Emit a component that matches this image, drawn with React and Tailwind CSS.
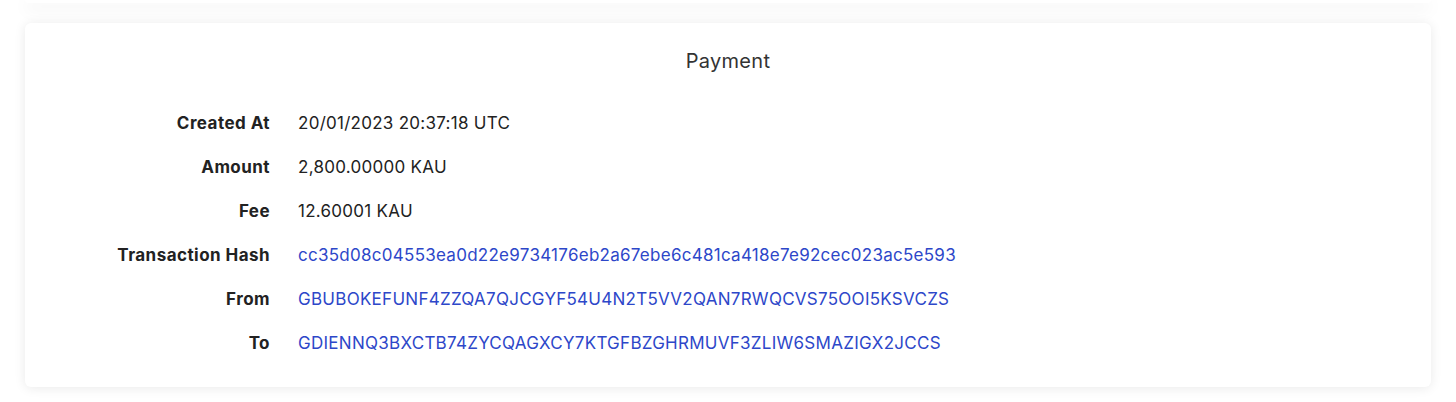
export default function App() {
  const rows = [
    ["Created At", "20/01/2023 20:37:18 UTC", false],
    ["Amount", "2,800.00000 KAU", false],
    ["Fee", "12.60001 KAU", false],
    ["Transaction Hash", "cc35d08c04553ea0d22e9734176eb2a67ebe6c481ca418e7e92cec023ac5e593", true],
    ["From", "GBUBOKEFUNF4ZZQA7QJCGYF54U4N2T5VV2QAN7RWQCVS75OOI5KSVCZS", true],
    ["To", "GDIENNQ3BXCTB74ZYCQAGXCY7KTGFBZGHRMUVF3ZLIW6SMAZIGX2JCCS", true],
  ];
  return (
    <div className="w-[1456px] h-[402px] bg-white overflow-hidden" style={{ fontFamily: "Inter, 'Noto Sans', sans-serif" }}>
      <div className="mx-[25px] h-[3px] bg-white rounded-b-md shadow-[0_5px_16px_rgba(0,0,0,0.13)]" />
      <div className="mx-[25px] mt-[20px] h-[364px] bg-white rounded-[6px] shadow-[0_1px_12px_rgba(0,0,0,0.09)] pt-[24px]">
        <div className="text-center text-[20px] leading-[28px] tracking-[0.3px] text-[#333] font-normal">Payment</div>
        <div className="mt-[27px] grid grid-cols-[245px_1fr] gap-x-[28px]">
          {rows.map(([k, v, link]) => (
            <div key={k} className="contents">
              <div className="h-[44px] flex items-center justify-end text-[17px] tracking-[0.45px] font-bold text-[#222]">{k}</div>
              <div className={"h-[44px] flex items-center text-[17px] tracking-[0.27px] " + (link ? "text-[#2d47c9]" : "text-[#222]")}>{v}</div>
            </div>
          ))}
        </div>
      </div>
    </div>
  );
}
